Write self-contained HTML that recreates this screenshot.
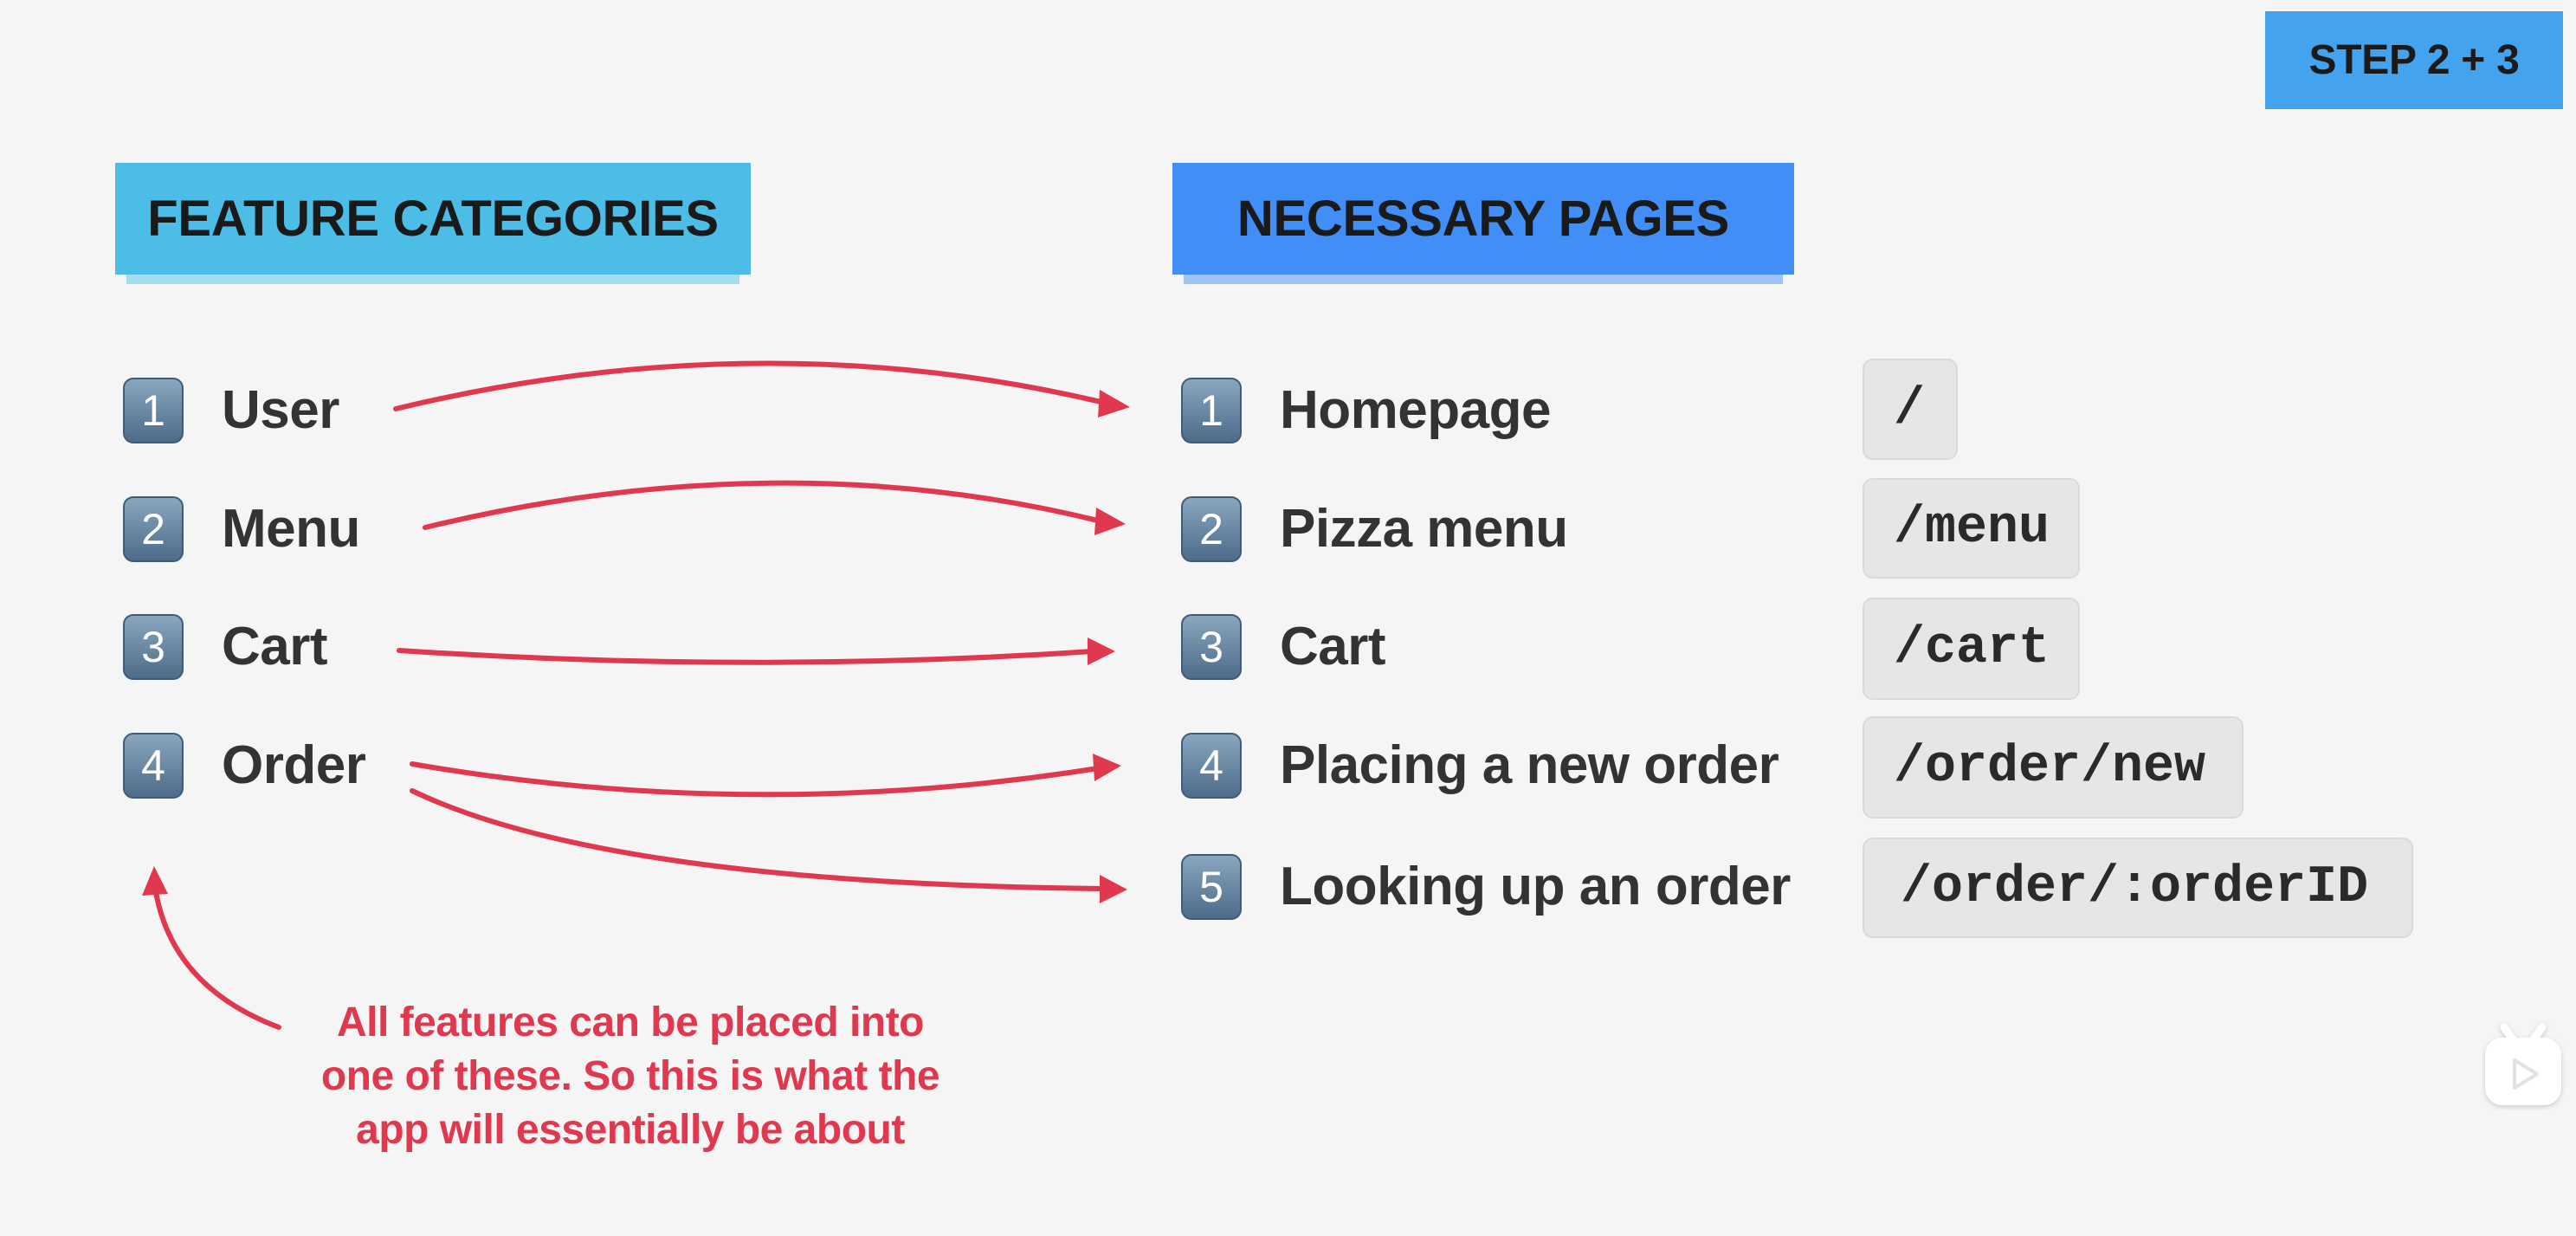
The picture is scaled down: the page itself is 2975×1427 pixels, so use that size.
<!DOCTYPE html>
<html><head><meta charset="utf-8"><style>
*{margin:0;padding:0;box-sizing:border-box}
body{width:2975px;height:1427px;background:#f5f5f5;position:relative;overflow:hidden;font-family:"Liberation Sans",sans-serif}
.abs{position:absolute}
.hdr{position:absolute;font-weight:bold;color:#1a1a1a;font-size:58px;display:flex;align-items:center;justify-content:center;letter-spacing:-0.3px}
.strip{position:absolute;height:11px}
.badge{position:absolute;width:70px;height:76px;border-radius:12px;background:linear-gradient(#8aa6bf,#4d6c8a);border:2px solid #3f5b77;color:#fff;font-size:50px;display:flex;align-items:center;justify-content:center;font-family:"Liberation Sans",sans-serif}
.lbl{position:absolute;font-weight:bold;color:#333;font-size:62px;line-height:76px;letter-spacing:-0.5px}
.code{position:absolute;left:2151px;background:#e6e6e6;border:2px solid #dadada;border-radius:12px;font-family:"Liberation Mono",monospace;font-weight:bold;font-size:60px;color:#2a2a2a;display:flex;align-items:center;padding-left:34px}
.note{position:absolute;left:278px;width:900px;top:1150px;text-align:center;color:#e0384e;font-weight:bold;font-size:48px;line-height:62px;letter-spacing:-0.5px}
</style></head><body>
<div class="hdr" style="left:2616px;top:13px;width:344px;height:113px;background:#43a3ee;font-size:48px">STEP 2 + 3</div>
<div class="strip" style="left:146px;top:317px;width:708px;background:#a7dcef"></div>
<div class="hdr" style="left:133px;top:188px;width:734px;height:129px;background:#4bbde6">FEATURE CATEGORIES</div>
<div class="strip" style="left:1367px;top:317px;width:692px;background:#9fc3f5"></div>
<div class="hdr" style="left:1354px;top:188px;width:718px;height:129px;background:#418ef7">NECESSARY PAGES</div>

<div class="badge" style="left:142px;top:436px">1</div><div class="lbl" style="left:256px;top:436px">User</div>
<div class="badge" style="left:142px;top:573px">2</div><div class="lbl" style="left:256px;top:573px">Menu</div>
<div class="badge" style="left:142px;top:709px">3</div><div class="lbl" style="left:256px;top:709px">Cart</div>
<div class="badge" style="left:142px;top:846px">4</div><div class="lbl" style="left:256px;top:846px">Order</div>

<div class="badge" style="left:1364px;top:436px">1</div><div class="lbl" style="left:1478px;top:436px">Homepage</div>
<div class="badge" style="left:1364px;top:573px">2</div><div class="lbl" style="left:1478px;top:573px">Pizza menu</div>
<div class="badge" style="left:1364px;top:709px">3</div><div class="lbl" style="left:1478px;top:709px">Cart</div>
<div class="badge" style="left:1364px;top:846px">4</div><div class="lbl" style="left:1478px;top:846px">Placing a new order</div>
<div class="badge" style="left:1364px;top:986px">5</div><div class="lbl" style="left:1478px;top:986px">Looking up an order</div>

<div class="code" style="top:414px;width:110px;height:117px">/</div>
<div class="code" style="top:552px;width:251px;height:116px">/menu</div>
<div class="code" style="top:690px;width:251px;height:118px">/cart</div>
<div class="code" style="top:827px;width:440px;height:118px">/order/new</div>
<div class="code" style="top:967px;width:636px;height:116px;padding-left:42px">/order/:orderID</div>

<svg class="abs" style="left:0;top:0" width="2975" height="1427">
<g fill="none" stroke="#e0384e" stroke-width="6" stroke-linecap="round">
<path d="M457 472 Q880 370 1280 466"/>
<path d="M491 609 Q900 510 1272 602"/>
<path d="M461 751 Q870 778 1262 752"/>
<path d="M476 882 Q870 950 1268 887"/>
<path d="M476 913 Q700 1020 1275 1026"/>
<path d="M322 1186 Q200 1140 180 1030"/>
</g>
<g fill="#e0384e">
<polygon points="1305,470 1270,450 1268,482"/>
<polygon points="1300,605 1266,586 1264,618"/>
<polygon points="1288,752 1256,736 1256,768"/>
<polygon points="1295,884 1262,870 1264,902"/>
<polygon points="1302,1027 1270,1010 1270,1043"/>
<polygon points="178,1000 164,1034 194,1032"/>
</g>
</svg>

<div class="note">All features can be placed into<br>one of these. So this is what the<br>app will essentially be about</div>

<svg class="abs" style="left:2866px;top:1172px" width="100" height="110" viewBox="0 0 100 110">
<defs><filter id="s"><feDropShadow dx="0" dy="2" stdDeviation="3" flood-opacity="0.18"/></filter></defs>
<g filter="url(#s)">
<path d="M26 14 L36 28 M70 14 L60 28" stroke="#fff" stroke-width="9" stroke-linecap="round"/>
<rect x="4" y="26" width="88" height="78" rx="20" fill="#fff"/>
</g>
<path d="M38 52 L38 84 L64 68 Z" fill="#fff" stroke="#e2e2e2" stroke-width="4" stroke-linejoin="round"/>
</svg>
</body></html>
